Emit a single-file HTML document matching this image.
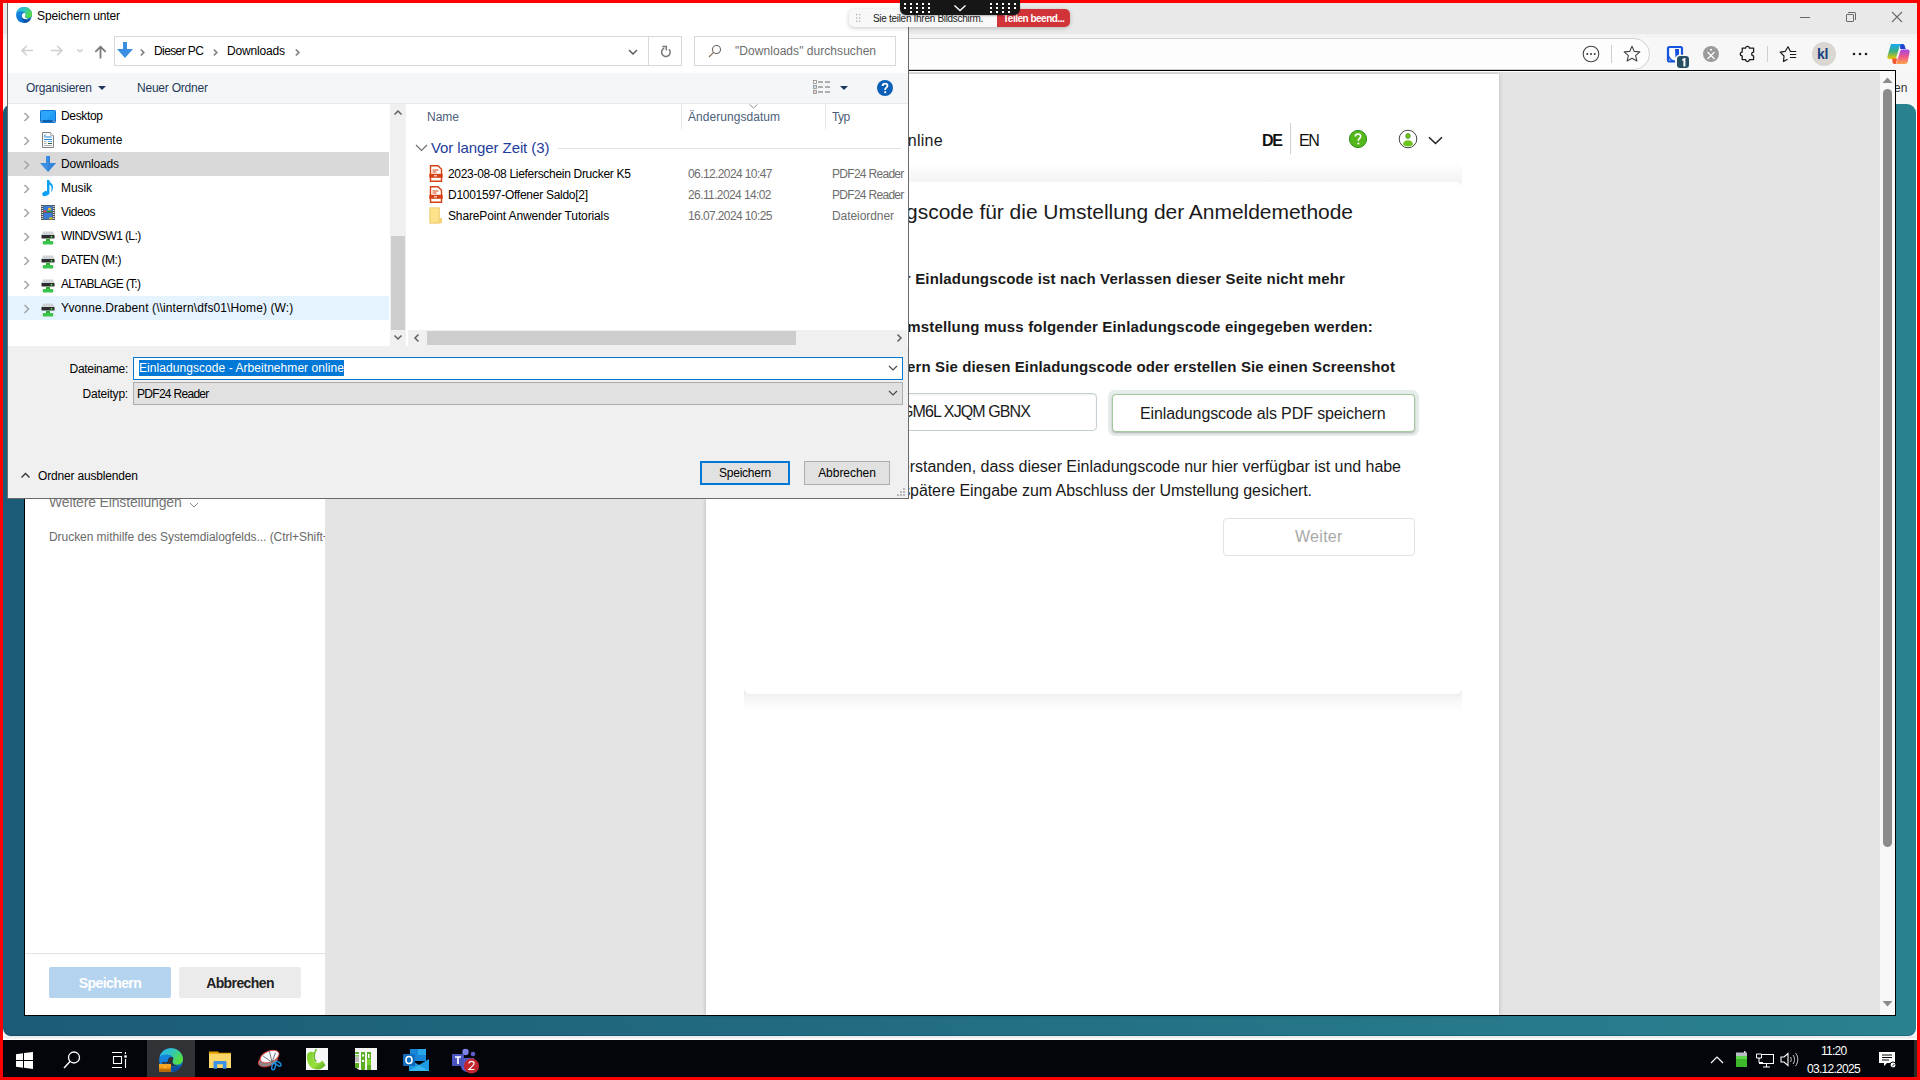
<!DOCTYPE html>
<html><head><meta charset="utf-8">
<style>
*{margin:0;padding:0;box-sizing:border-box}
html,body{width:1920px;height:1080px;overflow:hidden;background:#1f6580;font-family:"Liberation Sans",sans-serif;}
.a{position:absolute}
.t{position:absolute;white-space:nowrap;line-height:1}
/* layers */
#browser{left:3px;top:3px;width:1914px;height:1037px;background:#f6f6f6}
#tabstrip{left:3px;top:3px;width:1914px;height:31px;background:#e9e9e9}
#addr{left:3px;top:34px;width:1914px;height:36px;background:#f7f7f7}
#teal{left:3px;top:104px;width:1913px;height:932px;background:linear-gradient(90deg,#1b5b77,#2a8190);border-radius:9px 9px 8px 8px;box-shadow:inset 0 -1px 0 rgba(0,40,70,.22)}
#pm{left:24px;top:70px;width:1872px;height:946px;border:1px solid #000;background:#e4e4e4;overflow:hidden}
#leftpanel{left:25px;top:71px;width:300px;height:944px;background:#fff}
#page{left:706px;top:74px;width:793px;height:941px;background:#fff;box-shadow:0 0 4px rgba(0,0,0,.22)}
#vscroll{left:1880px;top:71px;width:15px;height:944px;background:#f8f8f8}
#taskbar{left:3px;top:1040px;width:1914px;height:37px;background:#03050a}
#dlg{left:7px;top:3px;width:902px;height:496px;background:#fff;border:1px solid #707070;border-top:none}
.red{background:#ff0000;position:absolute}
</style></head><body>
<div id="browser" class="a"></div>
<div id="tabstrip" class="a"></div>
<div id="addr" class="a"></div>

<!-- browser chrome -->
<div class="a" style="left:3px;top:34px;width:1914px;height:4px;background:#f3f3f3"></div>
<div class="a" style="left:100px;top:38px;width:1550px;height:32px;background:#fdfdfd;border:1px solid #d2d2d2;border-radius:16px"></div>
<div class="a" style="left:1800px;top:17px;width:10px;height:1px;background:#6a6a6a"></div>
<div class="a" style="left:1846px;top:14px;width:8px;height:8px;border:1px solid #6a6a6a;border-radius:1px"></div>
<div class="a" style="left:1848px;top:12px;width:8px;height:8px;border-top:1px solid #6a6a6a;border-right:1px solid #6a6a6a;border-radius:0 2px 0 0"></div>
<svg class="a" style="left:1891px;top:11px" width="12" height="12" viewBox="0 0 12 12"><path d="M1 1L11 11M11 1L1 11" stroke="#6a6a6a" stroke-width="1.1"/></svg>
<svg class="a" style="left:1581px;top:44px" width="20" height="20" viewBox="0 0 20 20"><circle cx="10" cy="10" r="7.8" fill="none" stroke="#444" stroke-width="1.1"/><circle cx="6.3" cy="10" r="1" fill="#333"/><circle cx="10" cy="10" r="1" fill="#333"/><circle cx="13.7" cy="10" r="1" fill="#333"/></svg>
<div class="a" style="left:1611px;top:45px;width:1px;height:18px;background:#d0d0d0"></div>
<svg class="a" style="left:1622px;top:44px" width="20" height="20" viewBox="0 0 20 20"><path d="M10 2.3l2.3 5.1 5.5.5-4.2 3.7 1.3 5.4L10 14.2l-4.9 2.8 1.3-5.4L2.2 7.9l5.5-.5z" fill="none" stroke="#444" stroke-width="1.1" stroke-linejoin="round"/></svg>
<svg class="a" style="left:1666px;top:45px" width="25" height="24" viewBox="0 0 25 24"><path d="M9 16.500H3.500C2.400 16.500 2 16 2 15V3.500C2 2.500 2.500 2 3.500 2H14.500C15.500 2 16 2.500 16 3.500V9.800" fill="none" stroke="#1554e0" stroke-width="2.200"/><path d="M4.500 4H13.500V10C13.500 12.500 11.500 14.500 9 15.500 6.500 14.500 4.500 12.500 4.500 10z" fill="#fff"/><path d="M9 4H13V9.500C11.500 10 10 11 9.500 13z" fill="#1550de"/><path d="M2.500 11c1 3 4 5 6.500 5.500" fill="none" stroke="#1a5ae0" stroke-width="1.500"/><rect x="11" y="11" width="12" height="12" rx="3.200" fill="#264f64"/><path d="M16.300 14.200l2-1.100h1.100v8.300h-2v-5.900l-1.100.5z" fill="#fff"/></svg>
<svg class="a" style="left:1702px;top:45px" width="18" height="18" viewBox="0 0 18 18"><circle cx="9" cy="9" r="8" fill="#9b9b9b"/><path d="M5.5 7L12.5 14M12.5 7L5.5 14" stroke="#fff" stroke-width="1.2"/><circle cx="9" cy="4.7" r="1" fill="#fff"/></svg>
<svg class="a" style="left:1738px;top:44px" width="20" height="20" viewBox="0 0 20 20"><path d="M4.200 4.200H7.600A1.900 1.900 0 0 1 11.400 4.200H15.600V8.100A1.900 1.900 0 0 0 15.600 11.900V15.600H11.400A1.900 1.900 0 0 1 7.600 15.600H4.200V11.800A1.900 1.900 0 0 1 4.200 8z" fill="none" stroke="#1a1a1a" stroke-width="1.250" stroke-linejoin="round"/></svg>
<div class="a" style="left:1767px;top:46px;width:1px;height:16px;background:#d0d0d0"></div>
<svg class="a" style="left:1779px;top:44px" width="20" height="20" viewBox="0 0 20 20"><path d="M8.600 15.200L4.500 17.500 5 12 1.200 8.200 6.300 7.300 9 2.700 11.500 7.500H17.200M11 10.500H17.200M11 13.500H17.200" fill="none" stroke="#1a1a1a" stroke-width="1.200" stroke-linejoin="round"/></svg>
<div class="a" style="left:1812px;top:42px;width:24px;height:24px;border-radius:50%;background:#dad6d2"></div>
<div class="t" style="left:1817px;top:47px;font-size:14px;font-weight:bold;color:#17407e;letter-spacing:-.3px">kl</div>
<svg class="a" style="left:1850px;top:50px" width="20" height="8" viewBox="0 0 20 8"><circle cx="4" cy="4" r="1.3" fill="#222"/><circle cx="10" cy="4" r="1.3" fill="#222"/><circle cx="16" cy="4" r="1.3" fill="#222"/></svg>
<svg class="a" style="left:1887px;top:44px" width="23" height="21" viewBox="0 0 23 21"><defs><linearGradient id="cp1" x1="0" y1="0" x2="0" y2="1"><stop offset="0" stop-color="#19a8f6"/><stop offset=".5" stop-color="#3cae80"/><stop offset="1" stop-color="#f2c800"/></linearGradient><linearGradient id="cp2" x1="0" y1="0" x2="0" y2="1"><stop offset="0" stop-color="#a047e8"/><stop offset=".5" stop-color="#f0568a"/><stop offset="1" stop-color="#ffa548"/></linearGradient></defs>
<path d="M13 0h2.500c1 0 1.800.7 2.100 1.600l1.100 3.400h-5.500z" fill="#1f44d4"/>
<path d="M4.500 0H15C13.700 0 13 1 12.600 2.300L9.300 13.500C9 14.500 8.300 15 7.200 15H2.200C.8 15 0 13.800.4 12.500L3.500 1.500C3.800.6 4 0 4.500 0z" fill="url(#cp1)"/>
<path d="M5.200 14.500h5L8.800 20H7.500C6.300 20 5.800 19 5.500 18z" fill="#f2552e"/>
<path d="M8.800 20H18c1.500 0 2.300-1 2.700-2.300L22.600 8c.3-1.300-.5-2.500-1.900-2.500H15.500c-1.200 0-2 .6-2.400 1.700L9.800 18c-.3 1.200-.6 2-1 2z" fill="url(#cp2)"/></svg>
<div class="t" style="left:1894px;top:82px;font-size:12px;color:#333">en</div>
<div id="teal" class="a"></div>
<div id="pm" class="a"></div>
<div id="leftpanel" class="a"></div>
<div id="page" class="a"></div>
<div id="vscroll" class="a"></div>

<div class="a" style="left:25px;top:71px;width:1870px;height:1px;background:#fff"></div>
<div class="t" style="left:49px;top:495px;font-size:14px;color:#767676;letter-spacing:-.16px">Weitere Einstellungen</div>
<svg class="a" style="left:189px;top:502px" width="10" height="6" viewBox="0 0 10 6"><path d="M1 1l4 4 4-4" fill="none" stroke="#8a8a8a" stroke-width="1"/></svg>
<div class="a" style="left:49px;top:530px;width:276px;height:16px;overflow:hidden"><div class="t" style="left:0;top:1px;font-size:12px;color:#6a6a6a;letter-spacing:-.05px">Drucken mithilfe des Systemdialogfelds... (Ctrl+Shift+P)</div></div>
<div class="a" style="left:25px;top:953px;width:300px;height:1px;background:#e3e3e3"></div>
<div class="a" style="left:49px;top:967px;width:122px;height:31px;border-radius:2px;background:#b3d3ef"></div>
<div class="t" style="left:49px;width:122px;text-align:center;top:976px;font-size:14px;font-weight:bold;color:#fff;letter-spacing:-.6px">Speichern</div>
<div class="a" style="left:179px;top:967px;width:122px;height:31px;border-radius:2px;background:#ebebeb"></div>
<div class="t" style="left:179px;width:122px;text-align:center;top:976px;font-size:14px;font-weight:bold;color:#222;letter-spacing:-.6px">Abbrechen</div>
<div class="a" style="left:1880px;top:72px;width:15px;height:943px;background:#f8f8f8"></div>
<svg class="a" style="left:1882px;top:77px" width="11" height="7" viewBox="0 0 11 7"><path d="M5.5 .5L10.5 6H.5z" fill="#8b8b8b"/></svg>
<div class="a" style="left:1883px;top:89px;width:9px;height:758px;border-radius:5px;background:#8b8b8b"></div>
<svg class="a" style="left:1882px;top:1000px" width="11" height="7" viewBox="0 0 11 7"><path d="M.5 1h10L5.5 6.5z" fill="#8b8b8b"/></svg>
<!-- page content -->
<div class="a" style="left:744px;top:162px;width:718px;height:28px;background:linear-gradient(#fff 0,#f2f3f3 20px,#f2f3f3 100%)"></div>
<div class="a" style="left:744px;top:686px;width:718px;height:27px;background:linear-gradient(#efefef 0,#efefef 8px,#f6f7f7 13px,#fbfbfb 19px,#fff 26px)"></div>
<div class="a" style="left:744px;top:182px;width:718px;height:512px;background:#fff;border-radius:6px"></div>

<div class="t" style="right:977px;top:133px;font-size:16px;color:#1a1a1a;letter-spacing:.3px">Arbeitnehmer online</div>
<div class="t" style="left:1262px;top:133px;font-size:16px;font-weight:bold;color:#111;letter-spacing:-1.3px">DE</div>
<div class="a" style="left:1290px;top:123px;width:1px;height:31px;background:#cfcfcf"></div>
<div class="t" style="left:1299px;top:133px;font-size:16px;color:#111;letter-spacing:-1.3px">EN</div>
<svg class="a" style="left:1348px;top:129px" width="20" height="20" viewBox="0 0 20 20"><circle cx="10" cy="10" r="8.6" fill="#54b81c" stroke="#2f8d1c" stroke-width="1"/><path d="M7.300 7.600c0-1.600 1.100-2.600 2.700-2.600s2.700 1 2.700 2.400c0 1.800-2.300 2-2.300 3.900v.6" fill="none" stroke="#fff" stroke-width="1.600"/><circle cx="10.400" cy="14.600" r="1" fill="#fff"/></svg>
<svg class="a" style="left:1398px;top:129px" width="20" height="20" viewBox="0 0 20 20"><circle cx="10" cy="10" r="8.800" fill="#fff" stroke="#444" stroke-width="1"/><ellipse cx="10" cy="7" rx="2.300" ry="2.600" fill="#6cc51c" stroke="#2d6a10" stroke-width=".5"/><path d="M5 15.500c0-2.600 2.200-4.200 5-4.200s5 1.600 5 4.200c-1.200 1.200-3 1.900-5 1.900s-3.800-.7-5-1.900z" fill="#6cc51c"/></svg>
<svg class="a" style="left:1428px;top:136px" width="15" height="9" viewBox="0 0 15 9"><path d="M1 1.200l6.500 6.300L14 1.200" fill="none" stroke="#222" stroke-width="1.600"/></svg>

<div class="t" style="right:567px;top:201px;font-size:21px;color:#1a1a1a;letter-spacing:-.03px">Einladungscode für die Umstellung der Anmeldemethode</div>
<div class="t" style="right:575px;top:271px;font-size:15px;font-weight:bold;color:#1a1a1a;letter-spacing:.17px">Der Einladungscode ist nach Verlassen dieser Seite nicht mehr</div>
<div class="t" style="right:547px;top:319px;font-size:15px;font-weight:bold;color:#1a1a1a;letter-spacing:.17px">Zur Umstellung muss folgender Einladungscode eingegeben werden:</div>
<div class="t" style="right:525px;top:359px;font-size:15px;font-weight:bold;color:#1a1a1a;letter-spacing:.12px">Bitte sichern Sie diesen Einladungscode oder erstellen Sie einen Screenshot</div>

<div class="a" style="left:760px;top:393px;width:337px;height:38px;border:1px solid #c5ced3;border-radius:4px;background:#fff;box-shadow:inset 0 1px 2px rgba(0,0,0,.08)"></div>
<div class="t" style="right:890px;top:404px;font-size:16px;color:#1a1a1a;letter-spacing:-.9px">XHGM6L XJQM GBNX</div>

<div class="a" style="left:1108px;top:390px;width:311px;height:46px;border-radius:7px;background:#e6ece9"></div>
<div class="a" style="left:1112px;top:394px;width:303px;height:38px;border:1px solid #a3c8a0;border-radius:4px;background:#fff;box-shadow:0 1px 2px rgba(0,0,0,.25)"></div>
<div class="t" style="left:1140px;top:406px;font-size:16px;color:#1a1a1a;letter-spacing:-.11px">Einladungscode als PDF speichern</div>

<div class="t" style="right:519px;top:459px;font-size:16px;color:#1a1a1a;letter-spacing:-.035px">Ich habe verstanden, dass dieser Einladungscode nur hier verfügbar ist und habe</div>
<div class="t" style="right:608px;top:483px;font-size:16px;color:#1a1a1a;letter-spacing:-.067px">ihn für die spätere Eingabe zum Abschluss der Umstellung gesichert.</div>

<div class="a" style="left:1223px;top:518px;width:192px;height:38px;border:1px solid #dde3e6;border-radius:4px;background:#fff"></div>
<div class="t" style="left:1295px;top:529px;font-size:16px;color:#a9a9a9;letter-spacing:.29px">Weiter</div>

<div id="taskbar" class="a"></div>
<!-- taskbar -->
<div class="a" style="left:3px;top:1036px;width:1914px;height:4px;background:linear-gradient(#e9e7e7,#f3f3f3 60%,#fff 75%,#fff)"></div>
<svg class="a" style="left:16px;top:1052px" width="17" height="17" viewBox="0 0 17 17"><path d="M0 2.300L7 1.300V8H0zM8 1.100L17 0v8H8zM0 9h7v6.700L0 14.700zM8 9h9v8l-9-1.200z" fill="#fff"/></svg>
<svg class="a" style="left:62px;top:1050px" width="20" height="20" viewBox="0 0 20 20"><circle cx="12" cy="7.500" r="5.500" fill="none" stroke="#fff" stroke-width="1.300"/><path d="M8 11.500L2 18" stroke="#fff" stroke-width="1.400"/></svg>
<svg class="a" style="left:111px;top:1051px" width="18" height="18" viewBox="0 0 18 18"><path d="M1 1.500h10M1 16.500h10M2.500 5.500h8v7h-8z" fill="none" stroke="#fff" stroke-width="1.100"/><path d="M14.500 1v2M14.500 8v9" stroke="#fff" stroke-width="1.100"/><rect x="13.300" y="4.300" width="2.400" height="2.400" fill="#fff"/></svg>
<div class="a" style="left:147px;top:1040px;width:48px;height:37px;background:#303236"></div>
<svg class="a" style="left:159px;top:1048px" width="24" height="24" viewBox="0 0 16 16"><defs><linearGradient id="tg1" x1="0" y1="0" x2="1" y2=".5"><stop offset="0" stop-color="#25b6f2"/><stop offset=".5" stop-color="#30c6bf"/><stop offset="1" stop-color="#55dd3f"/></linearGradient><linearGradient id="tg2" x1="0" y1="0" x2=".3" y2="1"><stop offset="0" stop-color="#1b93e3"/><stop offset="1" stop-color="#0a6fd2"/></linearGradient></defs>
<path d="M8 .1C12.500 .1 16 3.400 16 7.600 16 11.700 12.600 16 8 16 3.500 16 .1 12.400 .1 8 .1 3.600 3.500 .1 8 .1z" fill="url(#tg2)"/>
<path d="M.4 5.600C1.600 2.200 4.500 .1 8 .1c4.500 0 8 3.300 8 7.400 0 2.300-1.700 3.600-4 3.600-1.800 0-3.100-.9-3.100-2.100 0-1 .9-1.500.5-2.500C8.800 5 7.200 4.300 5.200 4.300 3.200 4.300 1.300 4.800.4 5.600z" fill="url(#tg1)"/>
<path d="M5.800 8C5.500 11 6.500 14 9.300 15.800 11.800 15.600 13.600 14.300 14.700 11.800 12.300 12.700 9.300 12.800 7.400 11.800 6.300 11 5.800 9.800 5.800 8z" fill="#0a4f9f"/>
<path d="M9.400 6.400C8.400 5.700 6.900 6 6.200 7.200 5.500 8.500 5.800 10.500 7.300 11.500 8.800 12.400 11.600 12.500 14.500 11.400 13.200 11.800 12.100 11.800 11 11.500 9.600 11 8.900 10.100 9 9.100 9.100 8.200 9.900 7.300 9.400 6.400z" fill="#303236"/>
<path d="M2.700 10.600v-.8h2.900v.8" fill="none" stroke="#303236" stroke-width=".9"/>
<rect x="0" y="10.700" width="8" height="5.300" fill="#e58a0c"/><rect x="0" y="10.700" width="8" height="2.300" fill="#f5a623"/><rect x="0" y="14.200" width="8" height="1.800" fill="#b86a08"/><rect x="3.500" y="12.400" width="1" height="1" fill="#ffd84a"/></svg>
<svg class="a" style="left:209px;top:1050px" width="22" height="20" viewBox="0 0 22 20"><path d="M0 1.500h9l1 1.200h12V18H0z" fill="#e8a200"/><rect x="0" y="3.800" width="22" height="14.200" fill="#fdd668"/><path d="M4.500 18.800V12c0-.6.4-1 1-1h11c.6 0 1 .4 1 1v6.800h-3.700V14.300h-5.600v4.500z" fill="#3a93e6"/></svg>
<svg class="a" style="left:257px;top:1048px" width="26" height="24" viewBox="0 0 26 24"><ellipse cx="11" cy="12.600" rx="10.200" ry="5.600" transform="rotate(-20 11 12.600)" fill="#8a8a8a" stroke="#d93030" stroke-width=".8"/><ellipse cx="12.600" cy="8.600" rx="10" ry="5.500" transform="rotate(-22 12.600 8.600)" fill="#f5f9fb" stroke="#e03a3a" stroke-width=".9"/><path d="M12.300 2.800L15 14.200M6.200 8.200L15 14.200M15 14.200l3.500-9.500" stroke="#6a6a6a" stroke-width=".9" fill="none"/><ellipse cx="16.600" cy="18.600" rx="1.700" ry="3.300" transform="rotate(15 16.600 18.600)" fill="none" stroke="#1e8fe0" stroke-width="1.400"/><ellipse cx="21.200" cy="15.800" rx="1.700" ry="3.200" transform="rotate(-55 21.200 15.800)" fill="none" stroke="#1e8fe0" stroke-width="1.400"/></svg>
<svg class="a" style="left:306px;top:1048px" width="22" height="22" viewBox="0 0 22 22"><defs><linearGradient id="gp" x1="0" y1="0" x2="1" y2="1"><stop offset="0" stop-color="#7ccf2e"/><stop offset=".6" stop-color="#98e03c"/><stop offset="1" stop-color="#4e9e1a"/></linearGradient></defs><rect x="0" y="0" width="22" height="22" fill="#f7f7f7"/><path d="M1.500 5.500C-.5 11 2.500 21 10.500 21.500 14 21.700 17 20.200 19.500 17.200L16.500 12.500C15 14.300 13 15.200 11 14.900 7.500 14.400 6.500 10 8 4.500 6 3.200 3 3.800 1.500 5.500z" fill="url(#gp)"/><path d="M10.500 1.200C9 3.500 7.800 7.500 8.500 11 8.900 12.500 9.800 13.300 10.500 13.500" fill="none" stroke="#62b82a" stroke-width="1.500"/></svg>
<svg class="a" style="left:355px;top:1048px" width="22" height="22" viewBox="0 0 22 22"><path d="M0 0h22v22H6C2.500 22 0 19.500 0 16z" fill="#f4f4f4"/><g fill="#5cae22"><rect x="0" y="4" width="4" height="9"/><rect x="6" y="4" width="4" height="18"/><rect x="12" y="4" width="4" height="18"/><rect x="0" y="15" width="4" height="5"/></g><g fill="#fff"><rect x="0" y="6" width="4" height="1.300"/><rect x="0" y="8.500" width="4" height="1.300"/><rect x="7" y="6.500" width="2" height="2"/><rect x="13" y="6" width="1.500" height="4"/><rect x="7" y="12" width="2" height="2"/></g><rect x="0" y="9" width="4" height="5" fill="#bbb"/><rect x="12" y="11" width="4" height="6" fill="#7ad02e"/></svg>
<svg class="a" style="left:403px;top:1049px" width="26" height="22" viewBox="0 0 26 22"><rect x="7" y="0" width="16" height="12" fill="#1a86d8"/><rect x="15" y="0" width="8" height="6" fill="#28a8ea"/><path d="M6 10l10 6 10-6v12H6z" fill="#1f9ae0"/><path d="M6 22l10-6 10 6z" fill="#38b6f0"/><rect x="0" y="5" width="12" height="12" rx="1" fill="#0f6cbd"/><ellipse cx="6" cy="11" rx="3" ry="3.500" fill="none" stroke="#fff" stroke-width="1.600"/></svg>
<svg class="a" style="left:452px;top:1048px" width="30" height="28" viewBox="0 0 30 28"><circle cx="13.500" cy="4" r="3.200" fill="#7b83eb"/><circle cx="21" cy="6" r="2.300" fill="#5b5fc7"/><path d="M9 10h13v8c0 3.500-3 6-6.500 6S9 21.500 9 18z" fill="#5059c9"/><rect x="0" y="6" width="12" height="12" rx="1" fill="#4b53bc"/><path d="M3 9h6M6 9v7" stroke="#fff" stroke-width="1.700"/><circle cx="19.500" cy="18" r="7.600" fill="#c4262e"/><path d="M16.800 15.500c.3-1.500 1.300-2.200 2.700-2.200 1.500 0 2.600.9 2.600 2.200 0 1.700-2.200 2.700-5.200 6h5.400" fill="none" stroke="#fff" stroke-width="1.200"/></svg>

<svg class="a" style="left:1710px;top:1055px" width="14" height="9" viewBox="0 0 14 9"><path d="M1 8l6-6 6 6" fill="none" stroke="#fff" stroke-width="1.200"/></svg>
<svg class="a" style="left:1735px;top:1051px" width="13" height="17" viewBox="0 0 13 17"><rect x="1" y="1.500" width="11" height="4" fill="#b8bcc8"/><rect x="1" y="5" width="11" height="11" fill="#3cb82a"/><rect x="1" y="5" width="11" height="3" fill="#5ed84a"/><rect x="9" y="0" width="1.500" height="2" fill="#ddd"/></svg>
<svg class="a" style="left:1756px;top:1053px" width="18" height="15" viewBox="0 0 18 15"><path d="M3.500 1.500h14v9h-14zM10.500 10.500v3M7 14h7" fill="none" stroke="#fff" stroke-width="1.100"/><path d="M.5 1h5v4h-5zM3 5v4.500h4" fill="#03050a" stroke="#fff" stroke-width="1"/></svg>
<svg class="a" style="left:1780px;top:1052px" width="19" height="15" viewBox="0 0 19 15"><path d="M1 5h3l4-3.500v12L4 10H1z" fill="none" stroke="#fff" stroke-width="1.100"/><path d="M10.500 5c1 1.500 1 3.500 0 5M13 3c2 2.500 2 6.500 0 9M15.500 1c3 3.500 3 9.500 0 13" fill="none" stroke="#ccc" stroke-width="1"/></svg>
<div class="t" style="left:1821px;top:1045px;font-size:12px;color:#fff;letter-spacing:-.75px">11:20</div>
<div class="t" style="left:1807px;top:1063px;font-size:12px;color:#fff;letter-spacing:-.72px">03.12.2025</div>
<svg class="a" style="left:1878px;top:1051px" width="19" height="18" viewBox="0 0 19 18"><path d="M1 1h16v11H9l-3 3v-3H1z" fill="#fff"/><path d="M4 4h10M4 6.500h10M4 9h7" stroke="#03050a" stroke-width="1"/><circle cx="15" cy="14" r="3" fill="#fff" stroke="#03050a" stroke-width="1"/><path d="M14 15.500l2.500-2.500" stroke="#03050a" stroke-width=".9"/></svg>
<div class="a" style="left:1914px;top:1040px;width:3px;height:37px;background:#2a2a2a"></div>


<!-- SAVE DIALOG -->
<div class="a" style="left:7px;top:3px;width:902px;height:496px;background:#fff;border-left:1px solid #6b6b6b;border-right:1px solid #6b6b6b;border-bottom:1px solid #6b6b6b"></div>
<svg class="a" style="left:16px;top:7px" width="16" height="16" viewBox="0 0 16 16"><defs><linearGradient id="eg1" x1="0" y1="0" x2="1" y2=".5"><stop offset="0" stop-color="#25b6f2"/><stop offset=".5" stop-color="#30c6bf"/><stop offset="1" stop-color="#55dd3f"/></linearGradient><linearGradient id="eg2" x1="0" y1="0" x2=".3" y2="1"><stop offset="0" stop-color="#1b93e3"/><stop offset="1" stop-color="#0a6fd2"/></linearGradient></defs>
<path d="M8 .1C12.5 .1 16 3.400 16 7.600 16 11.700 12.600 16 8 16 3.500 16 .1 12.400 .1 8 .1 3.600 3.500 .1 8 .1z" fill="url(#eg2)"/>
<path d="M.4 5.600C1.600 2.200 4.500 .1 8 .1c4.500 0 8 3.300 8 7.400 0 2.300-1.700 3.600-4 3.600-1.800 0-3.100-.9-3.100-2.100 0-1 .9-1.500.5-2.500C8.800 5 7.200 4.300 5.200 4.300 3.200 4.300 1.300 4.800.4 5.600z" fill="url(#eg1)"/>
<path d="M5.800 8C5.500 11 6.500 14 9.300 15.800 11.800 15.600 13.600 14.300 14.700 11.800 12.300 12.700 9.300 12.800 7.400 11.800 6.300 11 5.800 9.800 5.800 8z" fill="#0a4f9f"/>
<path d="M9.400 6.400C8.400 5.700 6.900 6 6.200 7.200 5.500 8.500 5.800 10.500 7.300 11.500 8.800 12.400 11.600 12.500 14.500 11.400 13.200 11.800 12.100 11.800 11 11.500 9.600 11 8.900 10.100 9 9.100 9.100 8.200 9.900 7.300 9.400 6.400z" fill="#fff"/></svg>
<div class="t" style="left:37px;top:10px;font-size:12px;color:#000;letter-spacing:-0.12px">Speichern unter</div>

<svg class="a" style="left:20px;top:44px" width="14" height="13" viewBox="0 0 14 13"><path d="M13 6.5H2.500M6.800 1.800l-4.700 4.700 4.700 4.700" fill="none" stroke="#cfcfcf" stroke-width="1.6"/></svg>
<svg class="a" style="left:50px;top:44px" width="14" height="13" viewBox="0 0 14 13"><path d="M1 6.5h10.500M7.200 1.800l4.700 4.700-4.700 4.700" fill="none" stroke="#cfcfcf" stroke-width="1.6"/></svg>
<svg class="a" style="left:76px;top:48px" width="8" height="5" viewBox="0 0 8 5"><path d="M1.200 1.200l2.800 2.600 2.800-2.600" fill="none" stroke="#d0d0d0" stroke-width="1.5"/></svg>
<svg class="a" style="left:94px;top:45px" width="13" height="14" viewBox="0 0 13 14"><path d="M6.500 13.500V2M1.300 6.800l5.200-5 5.200 5" fill="none" stroke="#7a7a7a" stroke-width="1.8"/></svg>

<div class="a" style="left:114px;top:36px;width:568px;height:30px;border:1px solid #d9d9d9;background:#fff"></div>
<div class="a" style="left:648px;top:37px;width:1px;height:28px;background:#d9d9d9"></div>
<svg class="a" style="left:117px;top:42px" width="16" height="16" viewBox="0 0 16 16"><path d="M6 0h4v7h6l-8 9-8-9h6z" fill="#3b8fe3"/></svg>
<svg class="a" style="left:139px;top:48px" width="7" height="9" viewBox="0 0 7 9"><path d="M1.800 1.500l3 3-3 3" fill="none" stroke="#808080" stroke-width="1.7"/></svg>
<div class="t" style="left:154px;top:45px;font-size:12px;color:#000;letter-spacing:-0.6px">Dieser PC</div>
<svg class="a" style="left:212px;top:48px" width="7" height="9" viewBox="0 0 7 9"><path d="M1.800 1.500l3 3-3 3" fill="none" stroke="#808080" stroke-width="1.7"/></svg>
<div class="t" style="left:227px;top:45px;font-size:12px;color:#000;letter-spacing:-0.17px">Downloads</div>
<svg class="a" style="left:294px;top:48px" width="7" height="9" viewBox="0 0 7 9"><path d="M1.800 1.500l3 3-3 3" fill="none" stroke="#808080" stroke-width="1.7"/></svg>
<svg class="a" style="left:628px;top:49px" width="10" height="6" viewBox="0 0 10 6"><path d="M1 1l4 4 4-4" fill="none" stroke="#555" stroke-width="1.4"/></svg>
<svg class="a" style="left:659px;top:45px" width="13" height="13" viewBox="0 0 13 13"><path d="M9.900 4.200A4.300 4.300 0 1 1 5.200 3.300" fill="none" stroke="#777" stroke-width="1.500"/><path d="M3.300 1.500H7.300V5.500" fill="none" stroke="#777" stroke-width="1.500"/></svg>

<div class="a" style="left:694px;top:36px;width:202px;height:30px;border:1px solid #d9d9d9;background:#fff"></div>
<svg class="a" style="left:708px;top:44px" width="14" height="14" viewBox="0 0 14 14"><circle cx="8.500" cy="5.500" r="4" fill="none" stroke="#666" stroke-width="1.1"/><path d="M5.600 8.400L1 13" stroke="#8a6d50" stroke-width="1.2"/></svg>
<div class="t" style="left:735px;top:45px;font-size:12px;color:#6d6d6d;letter-spacing:0.05px">"Downloads" durchsuchen</div>

<div class="a" style="left:8px;top:73px;width:900px;height:31px;background:#f5f6f7;border-bottom:1px solid #eaeaea"></div>
<div class="t" style="left:26px;top:82px;font-size:12px;color:#1e395b;letter-spacing:-0.25px">Organisieren</div>
<svg class="a" style="left:97px;top:85px" width="10" height="6" viewBox="0 0 10 6"><path d="M1 1h8L5 5z" fill="#1e395b"/></svg>
<div class="t" style="left:137px;top:82px;font-size:12px;color:#1e395b;letter-spacing:-0.22px">Neuer Ordner</div>
<svg class="a" style="left:813px;top:80px" width="18" height="15" viewBox="0 0 18 15"><rect x=".5" y=".5" width="3" height="3" fill="#fff" stroke="#888" stroke-width=".8"/><rect x=".5" y="5.500" width="3" height="3" fill="#fff" stroke="#888" stroke-width=".8"/><rect x=".5" y="10.500" width="3" height="3" fill="#fff" stroke="#888" stroke-width=".8"/><circle cx="2" cy="7" r=".6" fill="#3a7bd5"/><circle cx="2" cy="12" r=".6" fill="#e03030"/><path d="M5 2h5M12 2h5M5 7h5M12 7h5M5 12h5M12 12h5" stroke="#666" stroke-width="1"/></svg>
<svg class="a" style="left:839px;top:85px" width="10" height="6" viewBox="0 0 10 6"><path d="M1 1h8L5 5z" fill="#1b3864"/></svg>
<svg class="a" style="left:876px;top:79px" width="18" height="18" viewBox="0 0 18 18"><circle cx="9" cy="9" r="8" fill="#0c5fb8"/><path d="M6.600 7c0-1.500 1-2.400 2.500-2.400S11.500 5.400 11.500 6.800c0 1.700-2.300 1.900-2.300 3.600v.5" fill="none" stroke="#fff" stroke-width="1.800"/><circle cx="9.200" cy="13.200" r="1.100" fill="#fff"/></svg>


<div class="a" style="left:8px;top:152px;width:381px;height:24px;background:#d9d9d9"></div>
<div class="a" style="left:8px;top:296px;width:381px;height:24px;background:#e5f3ff"></div>
<svg class="a" style="left:23px;top:112px" width="8" height="10" viewBox="0 0 8 10"><path d="M1.5 1l4 4-4 4" fill="none" stroke="#a6a6a6" stroke-width="1.6"/></svg><svg class="a" style="left:40px;top:110px" width="16" height="13" viewBox="0 0 16 13"><rect x=".5" y=".5" width="15" height="12" rx=".8" fill="#1f9af5" stroke="#0b76d6"/><path d="M1 1h14L5 11H1z" fill="#36aefa" opacity=".6"/><rect x="1" y="10" width="14" height="2" fill="#0b5fae"/><circle cx="2" cy="11" r=".6" fill="#fff"/><circle cx="13" cy="11" r=".6" fill="#fff"/><circle cx="14.3" cy="11" r=".6" fill="#fff"/></svg><div class="t" style="left:61px;top:110px;font-size:12px;color:#000;letter-spacing:-0.34px">Desktop</div><svg class="a" style="left:23px;top:136px" width="8" height="10" viewBox="0 0 8 10"><path d="M1.5 1l4 4-4 4" fill="none" stroke="#a6a6a6" stroke-width="1.6"/></svg><svg class="a" style="left:42px;top:132px" width="12" height="16" viewBox="0 0 12 16"><path d="M.5 .5h8l3 3v12H.5z" fill="#fff" stroke="#808080"/><path d="M8.5 .5v3h3" fill="#eee" stroke="#999" stroke-width=".6"/><path d="M2.5 5h7M2 7.5h8" stroke="#1a7fd6" stroke-width="1"/><path d="M2 4.5l1.5-2" stroke="#1a7fd6"/><path d="M2 9.5h2.5M2 11.5h2.5M2 13.5h8" stroke="#999" stroke-width=".8"/><path d="M6 9.5h4" stroke="#5a9ee8" stroke-width=".9"/><path d="M6 11.5h4" stroke="#2e5e3a" stroke-width="1"/></svg><div class="t" style="left:61px;top:134px;font-size:12px;color:#000;letter-spacing:0px">Dokumente</div><svg class="a" style="left:23px;top:160px" width="8" height="10" viewBox="0 0 8 10"><path d="M1.5 1l4 4-4 4" fill="none" stroke="#a6a6a6" stroke-width="1.6"/></svg><svg class="a" style="left:40px;top:156px" width="16" height="16" viewBox="0 0 16 16"><path d="M6 0h4v7h6l-8 9-8-9h6z" fill="#3b8fe3"/><path d="M8 0h2v7h6l-8 9z" fill="#2b7ed6" opacity=".5"/></svg><div class="t" style="left:61px;top:158px;font-size:12px;color:#000;letter-spacing:-0.17px">Downloads</div><svg class="a" style="left:23px;top:184px" width="8" height="10" viewBox="0 0 8 10"><path d="M1.5 1l4 4-4 4" fill="none" stroke="#a6a6a6" stroke-width="1.6"/></svg><svg class="a" style="left:42px;top:180px" width="12" height="17" viewBox="0 0 12 17"><rect x="5" y="0" width="2.400" height="13.500" fill="#0ea0f5"/><ellipse cx="3.700" cy="13.500" rx="3.600" ry="2.500" transform="rotate(-20 3.700 13.500)" fill="#0ea0f5"/><path d="M7 0C7.500 2.500 11 3.500 11 7 11 8.500 10.500 10.500 9.500 11.700L9 11.300C9.600 10 9.800 8.800 9.500 7.500 9 5.500 7.800 4.800 7 4.500z" fill="#0ea0f5"/></svg><div class="t" style="left:61px;top:182px;font-size:12px;color:#000;letter-spacing:-0.09px">Musik</div><svg class="a" style="left:23px;top:208px" width="8" height="10" viewBox="0 0 8 10"><path d="M1.5 1l4 4-4 4" fill="none" stroke="#a6a6a6" stroke-width="1.6"/></svg><svg class="a" style="left:41px;top:205px" width="14" height="15" viewBox="0 0 14 15"><rect x="0" y="0" width="14" height="15" fill="#555"/><rect x="2.5" y=".7" width="9" height="6.4" fill="#3a7bd5"/><rect x="2.5" y="7.9" width="9" height="6.4" fill="#3a7bd5"/><circle cx="8.5" cy="4" r="1.6" fill="#e0c020"/><path d="M2.5 5.5h3v1.6h-3z" fill="#e05030"/><path d="M6 6h5.5v1.1H6z" fill="#2a9a3a"/><path d="M8 12.5h3.5v1.8H8z" fill="#e0c020"/><g fill="#fff"><rect x=".6" y="1" width="1.2" height="1"/><rect x=".6" y="3" width="1.2" height="1"/><rect x=".6" y="5" width="1.2" height="1"/><rect x=".6" y="7" width="1.2" height="1"/><rect x=".6" y="9" width="1.2" height="1"/><rect x=".6" y="11" width="1.2" height="1"/><rect x=".6" y="13" width="1.2" height="1"/><rect x="12.2" y="1" width="1.2" height="1"/><rect x="12.2" y="3" width="1.2" height="1"/><rect x="12.2" y="5" width="1.2" height="1"/><rect x="12.2" y="7" width="1.2" height="1"/><rect x="12.2" y="9" width="1.2" height="1"/><rect x="12.2" y="11" width="1.2" height="1"/><rect x="12.2" y="13" width="1.2" height="1"/></g></svg><div class="t" style="left:61px;top:206px;font-size:12px;color:#000;letter-spacing:-0.4px">Videos</div><svg class="a" style="left:23px;top:232px" width="8" height="10" viewBox="0 0 8 10"><path d="M1.5 1l4 4-4 4" fill="none" stroke="#a6a6a6" stroke-width="1.6"/></svg><svg class="a" style="left:41px;top:231px" width="14" height="14" viewBox="0 0 14 14"><path d="M2 .5h10l1.5 3.5h-13z" fill="#cfd3d8"/><rect x=".5" y="4" width="13" height="3.5" rx=".5" fill="#2c2c2c"/><circle cx="10.5" cy="5.8" r=".9" fill="#5dfa5d"/><rect x="5" y="8" width="4" height="2.5" fill="#2fae3a"/><rect x="2" y="10" width="10" height="3.5" fill="#3cc44a"/><rect x=".5" y="10.8" width="1.5" height="2" fill="#ddd"/><rect x="12" y="10.8" width="1.5" height="2" fill="#ddd"/></svg><div class="t" style="left:61px;top:230px;font-size:12px;color:#000;letter-spacing:-0.6px">WINDVSW1 (L:)</div><svg class="a" style="left:23px;top:256px" width="8" height="10" viewBox="0 0 8 10"><path d="M1.5 1l4 4-4 4" fill="none" stroke="#a6a6a6" stroke-width="1.6"/></svg><svg class="a" style="left:41px;top:255px" width="14" height="14" viewBox="0 0 14 14"><path d="M2 .5h10l1.5 3.5h-13z" fill="#cfd3d8"/><rect x=".5" y="4" width="13" height="3.5" rx=".5" fill="#2c2c2c"/><circle cx="10.5" cy="5.8" r=".9" fill="#5dfa5d"/><rect x="5" y="8" width="4" height="2.5" fill="#2fae3a"/><rect x="2" y="10" width="10" height="3.5" fill="#3cc44a"/><rect x=".5" y="10.8" width="1.5" height="2" fill="#ddd"/><rect x="12" y="10.8" width="1.5" height="2" fill="#ddd"/></svg><div class="t" style="left:61px;top:254px;font-size:12px;color:#000;letter-spacing:-0.44px">DATEN (M:)</div><svg class="a" style="left:23px;top:280px" width="8" height="10" viewBox="0 0 8 10"><path d="M1.5 1l4 4-4 4" fill="none" stroke="#a6a6a6" stroke-width="1.6"/></svg><svg class="a" style="left:41px;top:279px" width="14" height="14" viewBox="0 0 14 14"><path d="M2 .5h10l1.5 3.5h-13z" fill="#cfd3d8"/><rect x=".5" y="4" width="13" height="3.5" rx=".5" fill="#2c2c2c"/><circle cx="10.5" cy="5.8" r=".9" fill="#5dfa5d"/><rect x="5" y="8" width="4" height="2.5" fill="#2fae3a"/><rect x="2" y="10" width="10" height="3.5" fill="#3cc44a"/><rect x=".5" y="10.8" width="1.5" height="2" fill="#ddd"/><rect x="12" y="10.8" width="1.5" height="2" fill="#ddd"/></svg><div class="t" style="left:61px;top:278px;font-size:12px;color:#000;letter-spacing:-0.69px">ALTABLAGE (T:)</div><svg class="a" style="left:23px;top:304px" width="8" height="10" viewBox="0 0 8 10"><path d="M1.5 1l4 4-4 4" fill="none" stroke="#a6a6a6" stroke-width="1.6"/></svg><svg class="a" style="left:41px;top:303px" width="14" height="14" viewBox="0 0 14 14"><path d="M2 .5h10l1.5 3.5h-13z" fill="#cfd3d8"/><rect x=".5" y="4" width="13" height="3.5" rx=".5" fill="#2c2c2c"/><circle cx="10.5" cy="5.8" r=".9" fill="#5dfa5d"/><rect x="5" y="8" width="4" height="2.5" fill="#2fae3a"/><rect x="2" y="10" width="10" height="3.5" fill="#3cc44a"/><rect x=".5" y="10.8" width="1.5" height="2" fill="#ddd"/><rect x="12" y="10.8" width="1.5" height="2" fill="#ddd"/></svg><div class="t" style="left:61px;top:302px;font-size:12px;color:#000;letter-spacing:0.11px">Yvonne.Drabent (\\intern\dfs01\Home) (W:)</div>
<div class="a" style="left:390px;top:104px;width:16px;height:242px;background:#f0f0f0"></div>
<svg class="a" style="left:393px;top:109px" width="10" height="7" viewBox="0 0 10 7"><path d="M1.500 5.500L5 2l3.500 3.500" fill="none" stroke="#606060" stroke-width="1.500"/></svg>
<div class="a" style="left:391px;top:236px;width:14px;height:94px;background:#cdcdcd"></div>
<svg class="a" style="left:393px;top:334px" width="10" height="7" viewBox="0 0 10 7"><path d="M1.500 1.500L5 5l3.500-3.500" fill="none" stroke="#606060" stroke-width="1.500"/></svg>

<div class="t" style="left:427px;top:111px;font-size:12px;color:#4c607a;letter-spacing:0px">Name</div>
<div class="a" style="left:681px;top:104px;width:1px;height:25px;background:#e5e5e5"></div>
<div class="a" style="left:825px;top:104px;width:1px;height:25px;background:#e5e5e5"></div>
<svg class="a" style="left:749px;top:104px" width="9" height="5" viewBox="0 0 9 5"><path d="M.5 .5l4 3.500 4-3.500" fill="none" stroke="#888" stroke-width=".9"/></svg>
<div class="t" style="left:688px;top:111px;font-size:12px;color:#4c607a;letter-spacing:0.05px">Änderungsdatum</div>
<div class="t" style="left:832px;top:111px;font-size:12px;color:#4c607a;letter-spacing:-0.6px">Typ</div>

<svg class="a" style="left:415px;top:144px" width="13" height="8" viewBox="0 0 13 8"><path d="M1 1l5.500 5.500L12 1" fill="none" stroke="#6a6a6a" stroke-width="1.100"/></svg>
<div class="t" style="left:431px;top:140px;font-size:15px;color:#1e3c9a;letter-spacing:-.09px">Vor langer Zeit (3)</div>
<div class="a" style="left:558px;top:148px;width:343px;height:1px;background:#e2e2e2"></div>

<svg class="a" style="left:429px;top:165px" width="14" height="17" viewBox="0 0 14 17"><path d="M1.500 .8h7.500l3.500 3.500v11.900H1.500z" fill="#fff" stroke="#d64115" stroke-width="1.400"/><rect x=".3" y="8.800" width="13.400" height="4" fill="#d64115"/><path d="M3.500 5h6M3.500 7h4" stroke="#d64115" stroke-width="1"/><rect x="5" y="10" width="3" height="1.500" fill="#fff" opacity=".7"/></svg>
<div class="t" style="left:448px;top:168px;font-size:12px;color:#000;letter-spacing:-0.3px">2023-08-08 Lieferschein Drucker K5</div>
<div class="t" style="left:688px;top:168px;font-size:12px;color:#6d6d6d;letter-spacing:-0.6px">06.12.2024 10:47</div>
<div class="t" style="left:832px;top:168px;font-size:12px;color:#6d6d6d;letter-spacing:-0.7px">PDF24 Reader</div>

<svg class="a" style="left:429px;top:186px" width="14" height="17" viewBox="0 0 14 17"><path d="M1.500 .8h7.500l3.500 3.500v11.900H1.500z" fill="#fff" stroke="#d64115" stroke-width="1.400"/><rect x=".3" y="8.800" width="13.400" height="4" fill="#d64115"/><path d="M3.500 5h6M3.500 7h4" stroke="#d64115" stroke-width="1"/><rect x="5" y="10" width="3" height="1.500" fill="#fff" opacity=".7"/></svg>
<div class="t" style="left:448px;top:189px;font-size:12px;color:#000;letter-spacing:-0.27px">D1001597-Offener Saldo[2]</div>
<div class="t" style="left:688px;top:189px;font-size:12px;color:#6d6d6d;letter-spacing:-0.6px">26.11.2024 14:02</div>
<div class="t" style="left:832px;top:189px;font-size:12px;color:#6d6d6d;letter-spacing:-0.7px">PDF24 Reader</div>

<svg class="a" style="left:429px;top:207px" width="14" height="17" viewBox="0 0 14 17"><path d="M.8 .8h9.500v15.400H.8z" fill="#fce28a" stroke="#e8c460" stroke-width=".8"/><path d="M10.300 11v5.200H13V11z" fill="#f4d070"/></svg>
<div class="t" style="left:448px;top:210px;font-size:12px;color:#000;letter-spacing:-0.13px">SharePoint Anwender Tutorials</div>
<div class="t" style="left:688px;top:210px;font-size:12px;color:#6d6d6d;letter-spacing:-0.6px">16.07.2024 10:25</div>
<div class="t" style="left:832px;top:210px;font-size:12px;color:#6d6d6d;letter-spacing:-0.07px">Dateiordner</div>

<div class="a" style="left:408px;top:330px;width:499px;height:16px;background:#f0f0f0"></div>
<svg class="a" style="left:413px;top:333px" width="8" height="10" viewBox="0 0 8 10"><path d="M5.500 1.500L2 5l3.500 3.500" fill="none" stroke="#606060" stroke-width="1.500"/></svg>
<div class="a" style="left:427px;top:331px;width:369px;height:14px;background:#cdcdcd"></div>
<svg class="a" style="left:895px;top:333px" width="8" height="10" viewBox="0 0 8 10"><path d="M2.500 1.500L6 5 2.500 8.500" fill="none" stroke="#606060" stroke-width="1.500"/></svg>

<div class="a" style="left:8px;top:346px;width:900px;height:152px;background:#f0f0f0"></div>
<div class="t" style="left:8px;width:120px;text-align:right;top:363px;font-size:12px;color:#000;letter-spacing:-0.29px">Dateiname:</div>
<div class="a" style="left:133px;top:357px;width:770px;height:23px;border:1px solid #0078d7;background:#fff"></div>
<div class="a" style="left:139px;top:360px;width:205px;height:16px;background:#0078d7"></div>
<div class="t" style="left:139px;top:362px;font-size:12px;color:#fff;letter-spacing:0.06px">Einladungscode - Arbeitnehmer online</div>
<svg class="a" style="left:888px;top:365px" width="10" height="6" viewBox="0 0 10 6"><path d="M1 1l4 4 4-4" fill="none" stroke="#444" stroke-width="1.100"/></svg>
<div class="t" style="left:8px;width:120px;text-align:right;top:388px;font-size:12px;color:#000;letter-spacing:-0.2px">Dateityp:</div>
<div class="a" style="left:133px;top:382px;width:770px;height:23px;border:1px solid #adadad;background:#e1e1e1"></div>
<div class="t" style="left:137px;top:388px;font-size:12px;color:#000;letter-spacing:-0.7px">PDF24 Reader</div>
<svg class="a" style="left:888px;top:390px" width="10" height="6" viewBox="0 0 10 6"><path d="M1 1l4 4 4-4" fill="none" stroke="#444" stroke-width="1.100"/></svg>

<svg class="a" style="left:20px;top:472px" width="11" height="7" viewBox="0 0 11 7"><path d="M1.500 5.500l4-4 4 4" fill="none" stroke="#333" stroke-width="1.400"/></svg>
<div class="t" style="left:38px;top:470px;font-size:12px;color:#000;letter-spacing:-0.17px">Ordner ausblenden</div>

<div class="a" style="left:700px;top:461px;width:90px;height:24px;border:2px solid #0078d7;background:#e1e1e1"></div>
<div class="t" style="left:700px;width:90px;text-align:center;top:467px;font-size:12px;color:#000;letter-spacing:-0.25px">Speichern</div>
<div class="a" style="left:804px;top:461px;width:86px;height:24px;border:1px solid #adadad;background:#e1e1e1"></div>
<div class="t" style="left:804px;width:86px;text-align:center;top:467px;font-size:12px;color:#000;letter-spacing:-0.04px">Abbrechen</div>
<svg class="a" style="left:896px;top:487px" width="10" height="10" viewBox="0 0 10 10"><g fill="#b8b8b8"><rect x="7" y="1" width="2" height="2"/><rect x="4" y="4" width="2" height="2"/><rect x="7" y="4" width="2" height="2"/><rect x="1" y="7" width="2" height="2"/><rect x="4" y="7" width="2" height="2"/><rect x="7" y="7" width="2" height="2"/></g></svg>


<div class="red" style="left:0;top:0;width:1920px;height:3px"></div>
<div class="red" style="left:0;top:1077px;width:1920px;height:3px"></div>
<div class="red" style="left:0;top:0;width:3px;height:1080px"></div>
<div class="red" style="left:1917px;top:0;width:3px;height:1080px"></div>

<!-- teams share -->
<div class="a" style="left:849px;top:9px;width:221px;height:18px;border-radius:5px;background:#f8f8f8;box-shadow:0 1px 4px rgba(0,0,0,.22)"></div>
<svg class="a" style="left:855px;top:13px" width="7" height="10" viewBox="0 0 7 10"><g fill="#b0b0b0"><rect x="1" y="1" width="1.300" height="1.300"/><rect x="4" y="1" width="1.300" height="1.300"/><rect x="1" y="4.300" width="1.300" height="1.300"/><rect x="4" y="4.300" width="1.300" height="1.300"/><rect x="1" y="7.600" width="1.300" height="1.300"/><rect x="4" y="7.600" width="1.300" height="1.300"/></g></svg>
<div class="t" style="left:873px;top:14px;font-size:10px;color:#222;letter-spacing:-.3px">Sie teilen Ihren Bildschirm.</div>
<div class="a" style="left:997px;top:9px;width:73px;height:18px;border-radius:0 5px 5px 0;background:#d13438"></div>
<div class="t" style="left:1003px;top:14px;font-size:10px;font-weight:bold;color:#fff;letter-spacing:-.5px">Teilen beend...</div>
<div class="a" style="left:900px;top:0;width:120px;height:15px;border-radius:0 0 6px 6px;background:#161616;box-shadow:0 1px 2px rgba(0,0,0,.3)"></div>
<svg class="a" style="left:900px;top:0" width="120" height="15" viewBox="0 0 120 15"><g fill="#fff">
<rect x="4" y="3" width="2" height="2"/><rect x="10" y="3" width="2" height="2"/><rect x="16" y="3" width="2" height="2"/><rect x="22" y="3" width="2" height="2"/><rect x="28" y="3" width="2" height="2"/>
<rect x="4" y="7" width="2" height="2"/><rect x="10" y="7" width="2" height="2"/><rect x="16" y="7" width="2" height="2"/><rect x="22" y="7" width="2" height="2"/><rect x="28" y="7" width="2" height="2"/>
<rect x="10" y="11" width="2" height="2"/><rect x="16" y="11" width="2" height="2"/><rect x="22" y="11" width="2" height="2"/><rect x="28" y="11" width="2" height="2"/>
<rect x="90" y="3" width="2" height="2"/><rect x="96" y="3" width="2" height="2"/><rect x="102" y="3" width="2" height="2"/><rect x="108" y="3" width="2" height="2"/><rect x="114" y="3" width="2" height="2"/>
<rect x="90" y="7" width="2" height="2"/><rect x="96" y="7" width="2" height="2"/><rect x="102" y="7" width="2" height="2"/><rect x="108" y="7" width="2" height="2"/><rect x="114" y="7" width="2" height="2"/>
<rect x="90" y="11" width="2" height="2"/><rect x="96" y="11" width="2" height="2"/><rect x="102" y="11" width="2" height="2"/><rect x="108" y="11" width="2" height="2"/>
</g><path d="M54.500 5.500l5.500 5 5.500-5" fill="none" stroke="#fff" stroke-width="1.400"/></svg>
</body></html>
